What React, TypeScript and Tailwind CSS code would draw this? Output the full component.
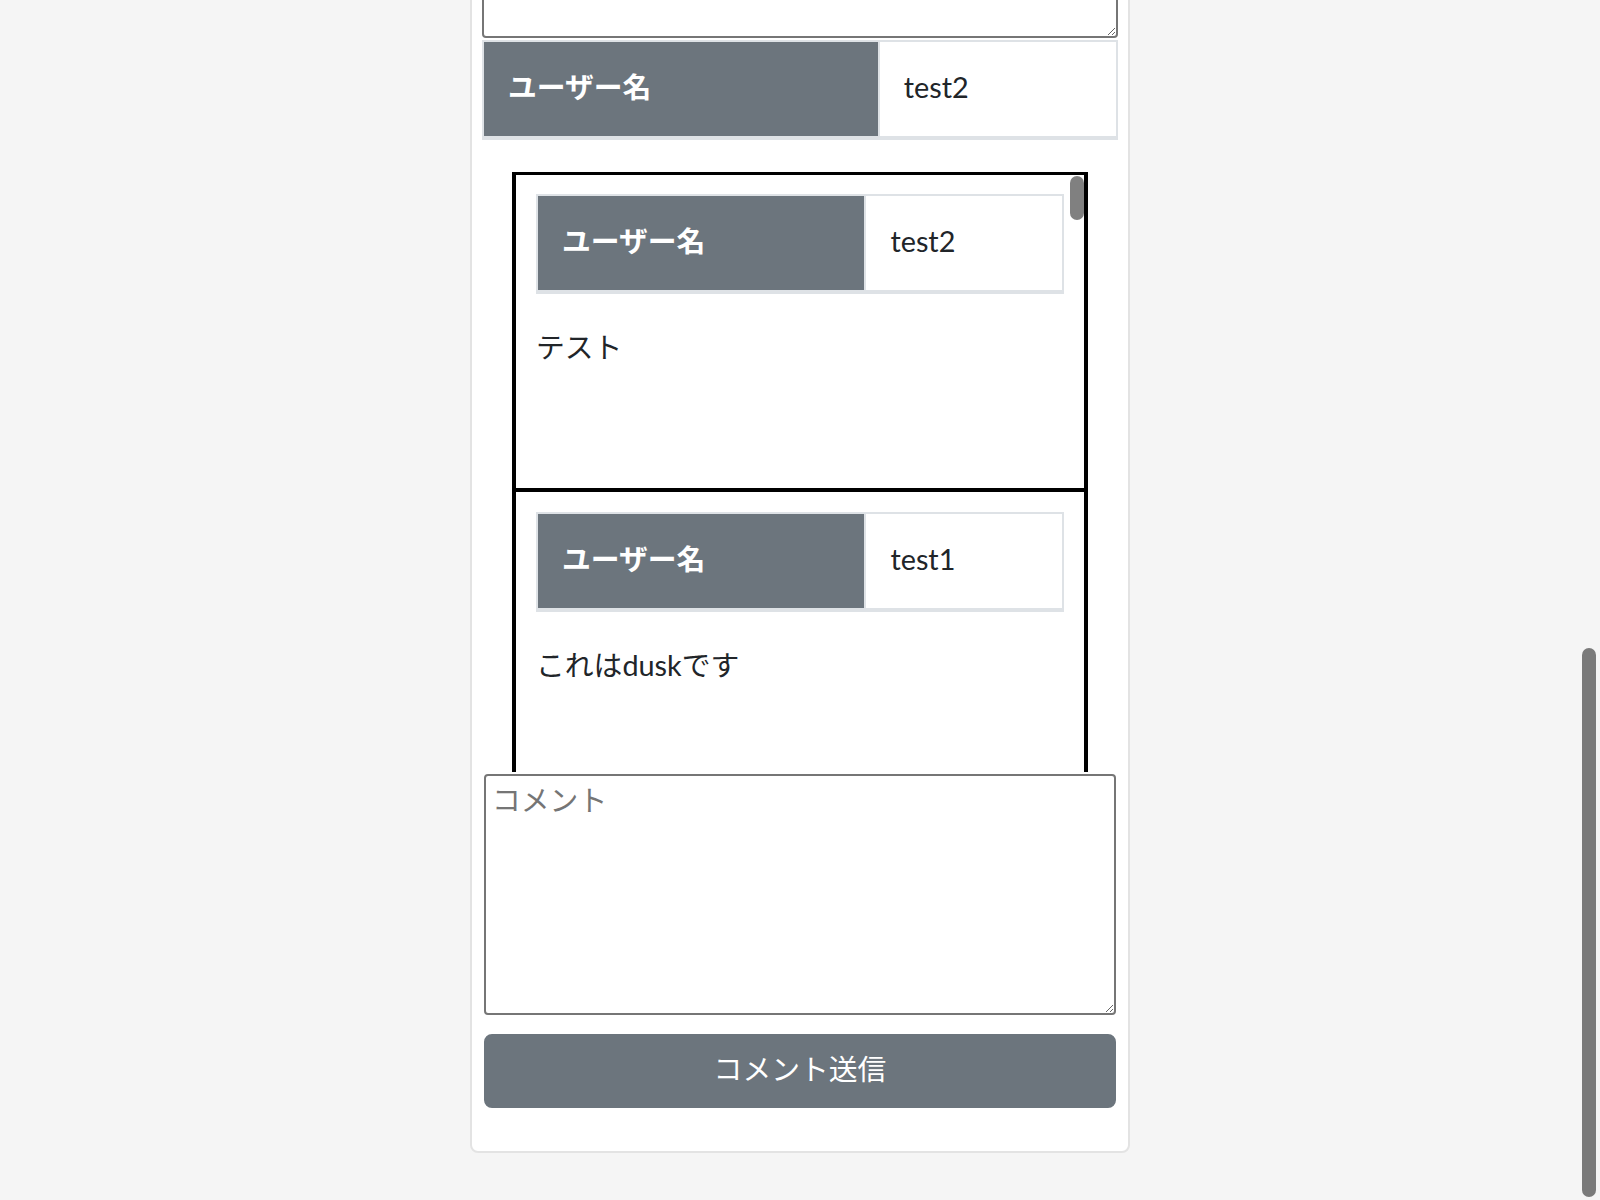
import React from "react";

type Comment = { user: string; body: string };

const comments: Comment[] = [
  { user: "test2", body: "テスト" },
  { user: "test1", body: "これはduskです" },
];

const UserRow = ({ name }: { name: string }) => (
  <div className="flex border-x-2 border-t-2 border-b-4 border-[#dee2e6] bg-white">
    <div className="w-[62.3%] bg-[#6c757d] px-[24px] pt-[22px] pb-[26px] font-bold text-white">ユーザー名</div>
    <div className="flex-1 border-l-2 border-[#dee2e6] px-[24px] pt-[22px] pb-[26px]">{name}</div>
  </div>
);

export default function App() {
  return (
    <div className="flex min-h-screen flex-col items-center bg-[#f5f5f5] font-[Lato,'Noto_Sans_CJK_JP',sans-serif] text-[28.8px] leading-[46px] text-[#212529]">
      <div className="-mt-[200px] box-border w-[660px] rounded-[8px] border-2 border-[#e3e3e3] bg-white px-[10px] pb-[43px]">
        <textarea className="box-border block h-[236px] w-full rounded-[4px] border-2 border-[#767676] bg-white" />

        <div className="mt-[2px]">
          <UserRow name="test2" />
        </div>

        {/* comment list, clipped at its bottom edge */}
        <div className="relative mx-[30px] mt-[32px] box-border h-[600px] overflow-hidden border-x-4 border-t-[3px] border-black">
          {comments.map((c, i) => (
            <div
              key={i}
              className={i === 0 ? "box-border h-[313px] px-[20px] pt-[19px]" : "box-border h-[313px] border-t-4 border-black px-[20px] pt-[20px]"}
            >
              <UserRow name={c.user} />
              <p className="mt-[30px]">{c.body}</p>
            </div>
          ))}
          <div className="absolute right-0 top-[1px] h-[44px] w-[14px] rounded-full bg-[#808080]" />
        </div>

        <div className="mx-[2px] mt-[2px]">
          <textarea
            placeholder="コメント"
            className="box-border block h-[241px] w-full rounded-[4px] border-2 border-[#767676] bg-white px-[6px] pt-[1px] placeholder:text-[#757575]"
          />
          <button className="mt-[19px] box-border block h-[74px] w-full rounded-[8px] border-2 border-[#6c757d] bg-[#6c757d] pt-[10px] pb-[14px] text-center text-white">
            コメント送信
          </button>
        </div>
      </div>

      {/* window overlay scrollbar */}
      <div className="fixed right-[4px] top-[648px] h-[549px] w-[14px] rounded-full bg-[#7a7a7a]" />
    </div>
  );
}
